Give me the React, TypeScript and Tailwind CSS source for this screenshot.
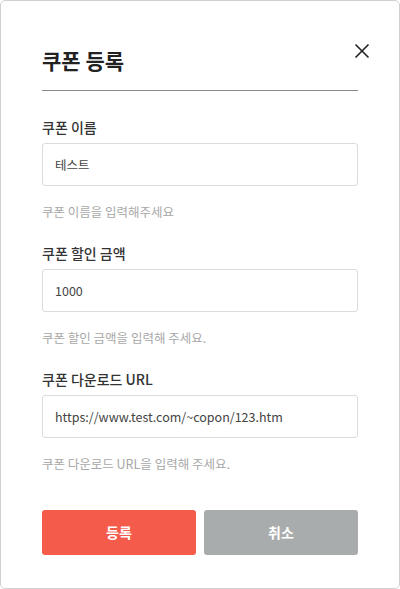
import React from "react";

const font = { fontFamily: '"Noto Sans CJK KR", "Noto Sans", sans-serif' };

interface Field {
    label: string;
    value: string;
    help: string;
}

const fields: Field[] = [
    { label: "쿠폰 이름", value: "테스트", help: "쿠폰 이름을 입력해주세요" },
    { label: "쿠폰 할인 금액", value: "1000", help: "쿠폰 할인 금액을 입력해 주세요." },
    { label: "쿠폰 다운로드 URL", value: "https://www.test.com/~copon/123.htm", help: "쿠폰 다운로드 URL을 입력해 주세요." },
];

const App = () => {
    return (
        <div className="w-[400px] h-[589px] bg-white" style={font}>
            <div className="h-full border border-[#d0d0d0] rounded-[5px] px-[41px] pt-[42px]">
                <div className="flex justify-between items-start">
                    <h2 className="text-[21px] leading-[32px] font-bold text-[#222] mt-[1px]">쿠폰 등록</h2>
                    <button className="w-[16px] h-[16px] mr-[-12px] mt-[0px] text-[#222]">
                        <svg width="16" height="16" viewBox="0 0 16 16" fill="none" stroke="currentColor" strokeWidth="1.6">
                            <path d="M1.5 1.5 L14.5 14.5 M14.5 1.5 L1.5 14.5" />
                        </svg>
                    </button>
                </div>
                <div className="mt-[14px] h-px bg-[#8a8a8a]" />

                <div className="mt-[26px] flex flex-col gap-[22px]">
                    {fields.map((f) => (
                        <div key={f.label}>
                            <label className="block text-[14px] leading-[20px] font-medium text-[#333]">{f.label}</label>
                            <input
                                type="text"
                                readOnly
                                value={f.value}
                                className="mt-[6px] w-full h-[43px] px-[12px] border border-[#dcdcdc] rounded-[3px] text-[12.5px] text-[#444] outline-none"
                                style={font}
                            />
                            <p className="mt-[17px] text-[12.5px] leading-[18px] text-[#a8a8a8]">{f.help}</p>
                        </div>
                    ))}
                </div>

                <div className="mt-[37px] grid grid-cols-2 gap-[8px]">
                    <button className="h-[45px] rounded-[3px] bg-[#f45b4a] text-white text-[14px] font-bold">등록</button>
                    <button className="h-[45px] rounded-[3px] bg-[#a9acad] text-white text-[14px] font-bold">취소</button>
                </div>
            </div>
        </div>
    );
};

export default App;
